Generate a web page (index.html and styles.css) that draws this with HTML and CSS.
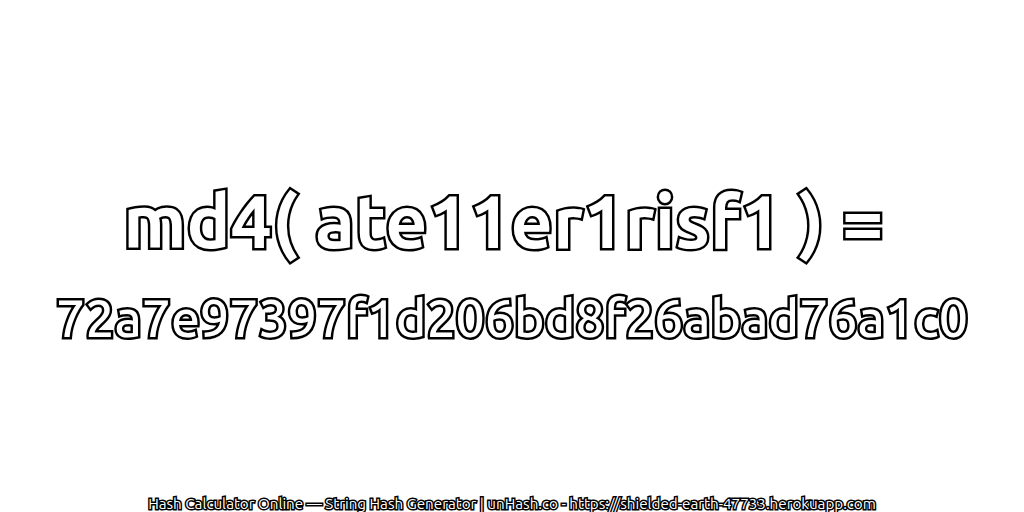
FILE: index.html
```html
<!DOCTYPE html>
<html lang="en">
<head>
    <meta charset="UTF-8">
    <title>unHash</title>
    <link rel="stylesheet" href="styles.css">
</head>
<body>
<div id="main">
    <div class="hash-title">md4( ate11er1risf1 ) = </div>
    <div class="hash-value">72a7e97397f1d206bd8f26abad76a1c0</div>
</div>
<div id="footer">Hash Calculator Online — String Hash Generator | unHash.co - https://shielded-earth-47733.herokuapp.com</div>
</body>
</html>
```

FILE: styles.css
```css
body {
    margin: 0;
    width: 1024px;
    height: 512px;
    display: flex;
    flex-direction: column;
    background: white;
    font-family: 'Ubuntu', 'Noto Sans', sans-serif;
    overflow: hidden;
}
#main {
    flex: 1;
    display: flex;
    flex-direction: column;
    align-items: center;
    padding-top: 167px;
}
.hash-title, .hash-value {
    color: white;
    -webkit-text-stroke: 5px black;
    paint-order: stroke fill;
    white-space: pre;
}
.hash-title {
    font-size: 73.5px;
    font-weight: bold;
    line-height: 107px;
}
.hash-value {
    font-size: 51.8px;
    font-weight: 500;
    line-height: 88px;
}
#footer {
    text-align: center;
    font-size: 15.2px;
    line-height: 16px;
    color: white;
    white-space: nowrap;
    -webkit-text-stroke: 3px black;
    paint-order: stroke fill;
}
```
